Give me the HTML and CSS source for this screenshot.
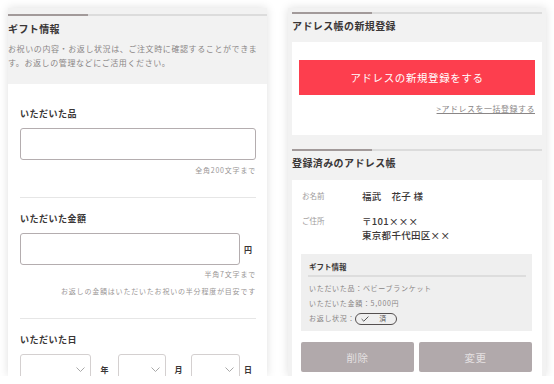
FILE: index.html
```html
<!DOCTYPE html>
<html lang="ja">
<head>
    <meta charset="UTF-8">
    <meta name="viewport" content="width=device-width, initial-scale=1.0">
    <title>ギフト情報 / アドレス帳</title>
    <link rel="stylesheet" href="styles.css">
</head>
<body>
    <div class="screens">
        <!-- Schermata sinistra: ギフト情報 -->
        <div class="panel panel-gift">
            <div class="gift-head">
                <div class="rule"></div>
                <h2 class="sec-title">ギフト情報</h2>
                <p class="desc">お祝いの内容・お返し状況は、ご注文時に確認することができます。お返しの管理などにご活用ください。</p>
            </div>

            <div class="form">
                <div class="field field-first">
                    <div class="label">いただいた品</div>
                    <div class="input"></div>
                    <div class="note">全角200文字まで</div>
                </div>

                <div class="field">
                    <div class="label">いただいた金額</div>
                    <div class="input-row">
                        <div class="input"></div>
                        <span class="unit unit-yen">円</span>
                    </div>
                    <div class="note note-tight">半角7文字まで</div>
                    <div class="note note-second">お返しの金額はいただいたお祝いの半分程度が目安です</div>
                </div>

                <div class="field">
                    <div class="label">いただいた日</div>
                    <div class="date-row">
                        <div class="select select-year"><svg width="9" height="5" viewBox="0 0 9 5"><path d="M0.5 0.5 L4.5 4.5 L8.5 0.5" fill="none" stroke="#a8a8a8" stroke-width="1"/></svg></div>
                        <span class="unit unit-year">年</span>
                        <div class="select select-month"><svg width="9" height="5" viewBox="0 0 9 5"><path d="M0.5 0.5 L4.5 4.5 L8.5 0.5" fill="none" stroke="#a8a8a8" stroke-width="1"/></svg></div>
                        <span class="unit unit-month">月</span>
                        <div class="select select-day"><svg width="9" height="5" viewBox="0 0 9 5"><path d="M0.5 0.5 L4.5 4.5 L8.5 0.5" fill="none" stroke="#a8a8a8" stroke-width="1"/></svg></div>
                        <span class="unit unit-day">日</span>
                    </div>
                </div>
            </div>
        </div>

        <!-- Schermata destra: アドレス帳 -->
        <div class="panel panel-address">
            <div class="rule"></div>
            <h2 class="sec-title">アドレス帳の新規登録</h2>
            <div class="card card-new">
                <div class="btn-red">アドレスの新規登録をする</div>
                <div class="link-row"><a class="link">&gt;アドレスを一括登録する</a></div>
            </div>

            <div class="rule rule-second"></div>
            <h2 class="sec-title">登録済みのアドレス帳</h2>
            <div class="card card-list">
                <div class="info-row">
                    <div class="info-label">お名前</div>
                    <div class="info-value">福武　花子 様</div>
                </div>
                <div class="info-row info-row-addr">
                    <div class="info-label">ご住所</div>
                    <div class="info-value">〒101×××<br>東京都千代田区××</div>
                </div>

                <div class="gift-box">
                    <div class="gift-box-title">ギフト情報</div>
                    <div class="gift-item">いただいた品：ベビーブランケット</div>
                    <div class="gift-item">いただいた金額：5,000円</div>
                    <div class="gift-item">お返し状況：<span class="pill"><svg width="8" height="6" viewBox="0 0 8 6"><path d="M0.6 3 L2.8 5.2 L7.4 0.6" fill="none" stroke="#444" stroke-width="0.9"/></svg><span class="pill-text">済</span></span></div>
                </div>

                <div class="actions">
                    <div class="btn-gray">削除</div>
                    <div class="btn-gray">変更</div>
                </div>
            </div>
        </div>
    </div>
</body>
</html>
```

FILE: styles.css
```css
/* Reset di base */
* { margin: 0; padding: 0; box-sizing: border-box; }

body {
    background: #ffffff;
    font-family: "Noto Sans CJK JP", "Noto Sans", sans-serif;
    color: #333333;
}

/* Due schermate affiancate */
.screens {
    display: flex;
    gap: 21px;
    padding: 8px 0 0 8px;
}

.panel {
    height: 368px;
    overflow: hidden;
    background: #f2f2f2;
    box-shadow: 0 0 9px rgba(0, 0, 0, 0.13);
}

.panel-gift {
    width: 259px;
    padding-top: 6px;
}

.panel-address {
    width: 258px;
    padding: 4px 4px 0 4px;
}

/* Linea titolo sezione */
.rule {
    height: 2px;
    background: linear-gradient(to right, #a29a9a 80px, #dcdcdc 80px);
}

.sec-title {
    font-size: 10px;
    font-weight: 700;
    letter-spacing: 0.4px;
    line-height: 16px;
    margin-top: 4px;
    color: #3a3636;
}

/* Sinistra: intestazione */
.gift-head {
    padding-bottom: 14px;
}

.gift-head .sec-title {
    margin-top: 5px;
}

.desc {
    margin-top: 5px;
    font-size: 8px;
    letter-spacing: 0.6px;
    line-height: 14px;
    color: #8a8686;
}

/* Form */
.form {
    background: #ffffff;
    padding: 0 11px 0 12px;
    height: 100%;
}

.field {
    padding: 14px 0 22px;
    border-bottom: 1px solid #e6e6e6;
}

.field-first {
    padding-top: 23px;
}

.label {
    font-size: 9px;
    font-weight: 700;
    letter-spacing: 0.5px;
    line-height: 14px;
    color: #3a3636;
}

.input {
    margin-top: 7px;
    height: 32px;
    border: 1px solid #b4adaf;
    border-radius: 3px;
    background: #ffffff;
}

.input-row {
    display: flex;
    align-items: center;
}

.input-row .input {
    flex: 1;
}

.unit {
    font-size: 8px;
    font-weight: 700;
    color: #3a3636;
    text-align: center;
}

.unit-yen {
    width: 16px;
    margin-top: 7px;
}

.note {
    margin-top: 5px;
    font-size: 7px;
    letter-spacing: 0.8px;
    line-height: 10px;
    color: #9a9696;
    text-align: right;
}

.note-tight {
    margin-top: 4px;
}

.note-second {
    margin-top: 7px;
}

/* Selettori data */
.date-row {
    display: flex;
    align-items: center;
    margin-top: 7px;
}

.select {
    height: 31px;
    border: 1px solid #d4d0d0;
    border-radius: 3px;
    display: flex;
    align-items: center;
    justify-content: flex-end;
    padding-right: 5px;
}

.select-year { width: 71px; }
.select-month { width: 48px; }
.select-day { width: 49px; }

.unit-year { width: 27px; }
.unit-month { width: 25px; }
.unit-day { width: 16px; }

/* Destra: card */
.card {
    background: #ffffff;
    margin-top: 8px;
}

.card-new {
    padding: 18px 7px 20px;
    margin-bottom: 14px;
}

.btn-red {
    height: 35px;
    background: #fd3e4e;
    color: #ffffff;
    font-size: 10.5px;
    letter-spacing: 0.6px;
    display: flex;
    align-items: center;
    justify-content: center;
}

.link-row {
    margin-top: 4px;
    text-align: right;
    line-height: 12px;
}

.link {
    font-size: 8px;
    letter-spacing: 0.5px;
    color: #8a8686;
    text-decoration: underline;
}

.card-list {
    margin-top: 9px;
    padding: 9px 10px 10px 9px;
}

.info-row {
    display: flex;
    line-height: 14px;
}

.info-row-addr {
    margin-top: 11px;
}

.info-label {
    width: 61px;
    padding-left: 1px;
    font-size: 7.5px;
    color: #a09c9c;
}

.info-value {
    font-size: 9.5px;
    letter-spacing: 0.3px;
    font-weight: 500;
    color: #3a3636;
}

/* Riquadro info regalo */
.gift-box {
    margin-top: 12px;
    background: #efefef;
    padding: 7px 6px 5px 8px;
}

.gift-box-title {
    font-size: 7.5px;
    font-weight: 700;
    line-height: 11px;
    color: #3a3636;
    padding-bottom: 3px;
    border-bottom: 2px solid #dddddd;
    margin-left: -1px;
    padding-left: 1px;
}

.gift-item {
    font-size: 7px;
    letter-spacing: 0.7px;
    line-height: 15px;
    color: #8a8686;
    display: flex;
    align-items: center;
}

.gift-item:nth-child(2) {
    margin-top: 4px;
}

.pill {
    display: inline-flex;
    align-items: center;
    width: 42px;
    height: 12px;
    border: 1px solid #555050;
    border-radius: 6px;
    padding-left: 5px;
}

.pill-text {
    margin-left: 10px;
    color: #555050;
}

/* Pulsanti */
.actions {
    display: flex;
    gap: 5px;
    margin-top: 11px;
}

.btn-gray {
    flex: 1;
    height: 30px;
    background: #b1a9ab;
    border-radius: 2px;
    color: #e4e0e1;
    font-size: 10.5px;
    letter-spacing: 0.5px;
    display: flex;
    align-items: center;
    justify-content: center;
}
```
